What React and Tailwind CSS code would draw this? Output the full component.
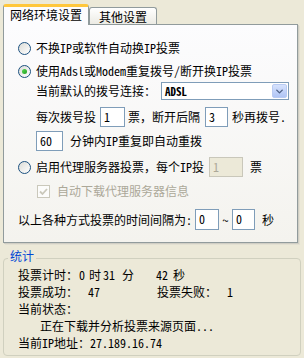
import { ChevronDown } from 'lucide-react';

const FONT = "font-['Noto_Sans_Mono_CJK_SC','Noto_Sans_CJK_SC',sans-serif]";

function Radio({ checked }) {
    return (
        <span className="w-[13px] h-[13px] shrink-0 rounded-full border border-[#1c5180] bg-linear-to-br from-[#dcdcd7] to-white flex items-center justify-center">
            {checked && <span className="w-[5px] h-[5px] rounded-full bg-linear-to-br from-[#55d751] to-[#21a121]" />}
        </span>
    );
}

function Field({ value, width, disabled }) {
    return (
        <span
            className={`h-[20px] shrink-0 border flex items-start pl-[3px] pt-[2px] leading-[14px] ${
                disabled ? 'border-[#c9c7ba] bg-[#ece9d8] text-[#aca899]' : 'border-[#7f9db9] bg-white text-black'
            } ${width}`}
        >
            {value}
        </span>
    );
}

export default function App() {
    return (
        <div className={`w-[304px] h-[358px] bg-[#ece9d8] overflow-hidden whitespace-nowrap text-[12px] leading-none text-black ${FONT}`}>
            {/* tabs */}
            <div className="h-[24px] flex items-end pl-[3px]">
                <div className="relative z-10 -mb-px w-[86px] h-[21px] rounded-t-[3px] border-x border-[#919b9c] border-t-[3px] border-t-[#ffc73c] bg-[#fcfcfe] flex items-center justify-center">
                    <span className="-mt-[2px]">网络环境设置</span>
                </div>
                <div className="w-[68px] h-[17px] rounded-t-[3px] border-x border-t border-[#919b9c] bg-linear-to-b from-white to-[#ecebe4] flex items-center justify-center">
                    <span className="mt-[1px]">其他设置</span>
                </div>
            </div>

            {/* panel */}
            <div className="ml-[3px] w-[295px] h-[219px] border border-[#919b9c] bg-linear-to-b from-[#fcfcfe] to-[#f4f3ee] shadow-[1px_1px_0_#d0cec4,2px_2px_0_#e3e0d2]">
                <div className="mt-[15px] h-[16px] pl-[14px] flex items-center gap-[5px]">
                    <Radio />
                    <span>不换IP或软件自动换IP投票</span>
                </div>
                <div className="mt-[7px] h-[16px] pl-[14px] flex items-center gap-[5px]">
                    <Radio checked />
                    <span>使用Adsl或Modem重复拨号/断开换IP投票</span>
                </div>
                <div className="mt-[3px] h-[18px] pl-[32px] flex items-center">
                    <span className="w-[125px] shrink-0">当前默认的拨号连接：</span>
                    <div className="w-[128px] h-[18px] border border-[#7f9db9] bg-white flex items-center justify-between">
                        <span className="pl-[3px] text-[11px] font-bold">ADSL</span>
                        <span className="w-[15px] h-[14px] mr-px rounded-[2px] border border-[#b9cbf3] bg-linear-to-b from-[#d6e2fd] to-[#b0c5f5] flex items-center justify-center">
                            <ChevronDown size={11} strokeWidth={3} className="text-[#4d6185]" />
                        </span>
                    </div>
                </div>
                <div className="mt-[7px] h-[20px] pl-[32px] flex items-center">
                    <span className="w-[64px] shrink-0">每次拨号投</span>
                    <Field value="1" width="w-[25px]" />
                    <span className="ml-[3px] w-[77px] shrink-0">票，断开后隔</span>
                    <Field value="3" width="w-[23px]" />
                    <span className="ml-[4px]">秒再拨号.</span>
                </div>
                <div className="mt-[4px] h-[20px] pl-[32px] flex items-center">
                    <Field value="60" width="w-[27px]" />
                    <span className="ml-[7px]">分钟内IP重复即自动重拨</span>
                </div>
                <div className="mt-[6px] h-[20px] pl-[14px] flex items-center">
                    <Radio />
                    <span className="ml-[5px] w-[173px] shrink-0">启用代理服务器投票，每个IP投</span>
                    <Field value="1" width="w-[34px]" disabled />
                    <span className="ml-[7px]">票</span>
                </div>
                <div className="mt-[7px] h-[14px] pl-[33px] flex items-center">
                    <span className="w-[13px] h-[13px] shrink-0 border border-[#cac8bb] bg-[#fcfcfb] flex items-center justify-center">
                        <svg width="9" height="9" viewBox="0 0 9 9">
                            <path d="M1 4.5 L3.5 7 L8 2" fill="none" stroke="#cac8bb" strokeWidth="1.8" />
                        </svg>
                    </span>
                    <span className="ml-[7px] text-[#aca899]">自动下载代理服务器信息</span>
                </div>
                <div className="mt-[11px] h-[21px] pl-[14px] flex items-center">
                    <span className="w-[177px] shrink-0">以上各种方式投票的时间间隔为:</span>
                    <Field value="0" width="w-[24px] h-[21px]" />
                    <span className="w-[13px] text-center">~</span>
                    <Field value="0" width="w-[23px] h-[21px]" />
                    <span className="ml-[7px]">秒</span>
                </div>
            </div>

            {/* stats group */}
            <div className="mx-[3px] mt-[6px]">
                <div className="relative z-10 h-[14px] leading-[14px] pl-[5px]">
                    <span className="px-[2px] bg-[#ece9d8] text-[#0046d5]">统计</span>
                </div>
                <div className="-mt-[5px] h-[98px] border border-[#d0d0bf] rounded-[4px] pl-[14px] pt-[7px] leading-[17px]">
                    <div className="flex">
                        <span className="w-[61px] shrink-0">投票计时：</span>
                        <span className="w-[10px]">0</span>
                        <span className="w-[14px]">时</span>
                        <span className="w-[19px]">31</span>
                        <span className="w-[34px]">分</span>
                        <span className="w-[17px]">42</span>
                        <span>秒</span>
                    </div>
                    <div className="flex">
                        <span className="w-[70px] shrink-0">投票成功：</span>
                        <span className="w-[69px]">47</span>
                        <span className="w-[70px] shrink-0">投票失败：</span>
                        <span>1</span>
                    </div>
                    <div>当前状态：</div>
                    <div className="pl-[22px]">正在下载并分析投票来源页面...</div>
                    <div className="flex">
                        <span className="w-[72px] shrink-0">当前IP地址：</span>
                        <span>27.189.16.74</span>
                    </div>
                </div>
            </div>
        </div>
    );
}
